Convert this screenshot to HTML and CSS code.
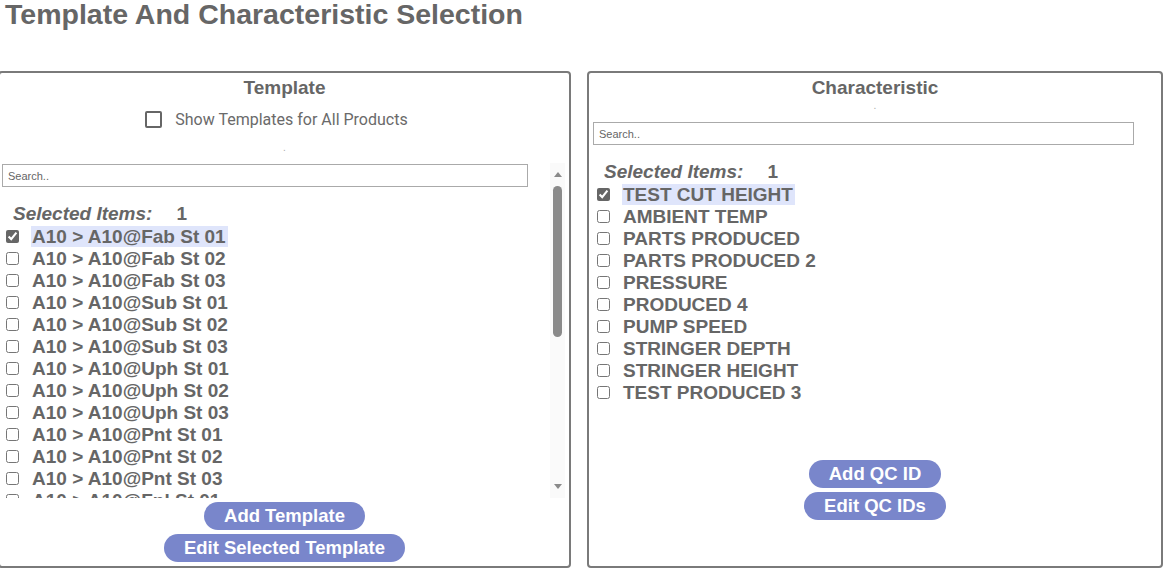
FILE: index.html
```html
<!DOCTYPE html>
<html lang="en">
<head>
<meta charset="utf-8">
<title>Template And Characteristic Selection</title>
<link rel="stylesheet" href="styles.css">
</head>
<body>
<h1 class="page-title">Template And Characteristic Selection</h1>
<div class="panels">
  <section class="panel panel--template">
    <h2 class="panel-title">Template</h2>
    <label class="show-all"><input type="checkbox" class="show-all-box"><span>Show Templates for All Products</span></label>
    <div class="dot dot--spaced">.</div>
    <div class="list list--scroll">
      <div class="list-content">
        <input class="search search--template" placeholder="Search..">
        <div class="selected"><span class="selected-label">Selected Items:</span><span class="selected-count">1</span></div>
        <label class="item"><input type="checkbox" checked><span class="item-text item-text--active">A10 &gt; A10@Fab St 01</span></label>
        <label class="item"><input type="checkbox"><span class="item-text">A10 &gt; A10@Fab St 02</span></label>
        <label class="item"><input type="checkbox"><span class="item-text">A10 &gt; A10@Fab St 03</span></label>
        <label class="item"><input type="checkbox"><span class="item-text">A10 &gt; A10@Sub St 01</span></label>
        <label class="item"><input type="checkbox"><span class="item-text">A10 &gt; A10@Sub St 02</span></label>
        <label class="item"><input type="checkbox"><span class="item-text">A10 &gt; A10@Sub St 03</span></label>
        <label class="item"><input type="checkbox"><span class="item-text">A10 &gt; A10@Uph St 01</span></label>
        <label class="item"><input type="checkbox"><span class="item-text">A10 &gt; A10@Uph St 02</span></label>
        <label class="item"><input type="checkbox"><span class="item-text">A10 &gt; A10@Uph St 03</span></label>
        <label class="item"><input type="checkbox"><span class="item-text">A10 &gt; A10@Pnt St 01</span></label>
        <label class="item"><input type="checkbox"><span class="item-text">A10 &gt; A10@Pnt St 02</span></label>
        <label class="item"><input type="checkbox"><span class="item-text">A10 &gt; A10@Pnt St 03</span></label>
        <label class="item"><input type="checkbox"><span class="item-text">A10 &gt; A10@Fnl St 01</span></label>
      </div>
      <div class="scrollbar" aria-hidden="true">
        <span class="sb-arrow sb-arrow--up"></span>
        <span class="sb-thumb"></span>
        <span class="sb-arrow sb-arrow--down"></span>
      </div>
    </div>
    <div class="actions">
      <button class="btn">Add Template</button>
      <button class="btn">Edit Selected Template</button>
    </div>
  </section>
  <section class="panel panel--characteristic">
    <h2 class="panel-title">Characteristic</h2>
    <div class="dot">.</div>
    <div class="list list--plain">
      <input class="search search--characteristic" placeholder="Search..">
      <div class="selected"><span class="selected-label">Selected Items:</span><span class="selected-count">1</span></div>
      <label class="item"><input type="checkbox" checked><span class="item-text item-text--active">TEST CUT HEIGHT</span></label>
      <label class="item"><input type="checkbox"><span class="item-text">AMBIENT TEMP</span></label>
      <label class="item"><input type="checkbox"><span class="item-text">PARTS PRODUCED</span></label>
      <label class="item"><input type="checkbox"><span class="item-text">PARTS PRODUCED 2</span></label>
      <label class="item"><input type="checkbox"><span class="item-text">PRESSURE</span></label>
      <label class="item"><input type="checkbox"><span class="item-text">PRODUCED 4</span></label>
      <label class="item"><input type="checkbox"><span class="item-text">PUMP SPEED</span></label>
      <label class="item"><input type="checkbox"><span class="item-text">STRINGER DEPTH</span></label>
      <label class="item"><input type="checkbox"><span class="item-text">STRINGER HEIGHT</span></label>
      <label class="item"><input type="checkbox"><span class="item-text">TEST PRODUCED 3</span></label>
    </div>
    <div class="actions">
      <button class="btn">Add QC ID</button>
      <button class="btn">Edit QC IDs</button>
    </div>
  </section>
</div>
</body>
</html>
```
FILE: styles.css
```css
html, body {
  margin: 0;
  padding: 0;
  background: #fff;
  overflow: hidden;
}

body {
  font-family: "Liberation Sans", Arial, sans-serif;
  color: #666;
}

.page-title {
  margin: 0 0 0 5px;
  font-size: 28.5px;
  line-height: 28px;
  font-weight: bold;
  color: #666;
}

.panels {
  display: flex;
  gap: 16px;
  margin: 43px 0 0 -2px;
}

.panel {
  box-sizing: border-box;
  height: 497px;
  border: 2px solid #7a7a7a;
  border-radius: 4px;
  padding-top: 4px;
  display: flex;
  flex-direction: column;
}

.panel--template {
  flex: 0 0 573px;
}

.panel--characteristic {
  flex: 0 0 576px;
}

.panel-title {
  margin: 0;
  font-size: 19px;
  line-height: 22px;
  font-weight: bold;
  text-align: center;
  color: #666;
}

.show-all {
  margin-top: 8px;
  height: 24px;
  display: flex;
  justify-content: center;
  align-items: center;
  gap: 13px;
  padding-right: 16px;
  font-family: Roboto, "Liberation Sans", sans-serif;
  font-size: 16px;
  color: #6a6a6a;
}

.show-all-box {
  appearance: none;
  -webkit-appearance: none;
  box-sizing: border-box;
  width: 17px;
  height: 17px;
  margin: 0;
  border: 2px solid #666;
  border-radius: 2px;
  background: #fff;
}

.dot {
  height: 14px;
  font-size: 10px;
  line-height: 14px;
  text-align: center;
  color: #aaa;
}

.dot--spaced {
  margin-top: 10px;
}

.list {
  box-sizing: border-box;
  height: 335px;
  margin-top: 8px;
}

.list--scroll {
  display: flex;
  margin-right: 4px;
}

.list-content {
  flex: 1;
  min-width: 0;
  overflow: hidden;
  padding-top: 1px;
}

.list--plain {
  overflow: hidden;
  padding: 1px 0 0 2px;
}

.scrollbar {
  flex: 0 0 15px;
  background: #fafafa;
  display: flex;
  flex-direction: column;
  align-items: center;
}

.sb-arrow {
  width: 0;
  height: 0;
  border-left: 4.5px solid transparent;
  border-right: 4.5px solid transparent;
}

.sb-arrow--up {
  margin-top: 9px;
  border-bottom: 5px solid #8a8a8a;
}

.sb-arrow--down {
  margin-top: auto;
  margin-bottom: 9px;
  border-top: 5px solid #8a8a8a;
}

.sb-thumb {
  margin-top: 9px;
  width: 9px;
  height: 151px;
  border-radius: 5px;
  background: #8a8a8a;
}

.search {
  display: block;
  box-sizing: border-box;
  height: 23px;
  margin: 0 0 0 2px;
  padding: 0 5px;
  border: 1px solid #aaa;
  border-radius: 0;
  font-family: "Liberation Sans", Arial, sans-serif;
  font-size: 11px;
  color: #333;
  outline: none;
}

.search::placeholder {
  color: #666;
}

.search--template {
  width: 526px;
}

.search--characteristic {
  width: 541px;
}

.selected {
  margin-top: 16px;
  height: 22px;
  line-height: 22px;
  padding-left: 13px;
  font-size: 19px;
  font-weight: bold;
  color: #666;
}

.selected-label {
  font-style: italic;
}

.selected-count {
  margin-left: 24px;
}

.item {
  display: flex;
  align-items: center;
  height: 22px;
}

.item input {
  width: 13px;
  height: 13px;
  margin: 0 12px 0 6px;
  accent-color: #666;
  flex: none;
}

.item-text {
  padding: 0 2px 0 1px;
  font-size: 19px;
  line-height: 21px;
  font-weight: bold;
  color: #666;
  white-space: nowrap;
}

.item-text--active {
  background: #dfe5fb;
}

.actions {
  margin-top: 4px;
  display: flex;
  flex-direction: column;
  align-items: center;
  gap: 4px;
}

.btn {
  height: 28px;
  padding: 0 20px;
  border: none;
  border-radius: 14px;
  background: #7986cb;
  color: #fff;
  font-family: "Liberation Sans", Arial, sans-serif;
  font-size: 18.5px;
  font-weight: bold;
  line-height: 28px;
}
```
